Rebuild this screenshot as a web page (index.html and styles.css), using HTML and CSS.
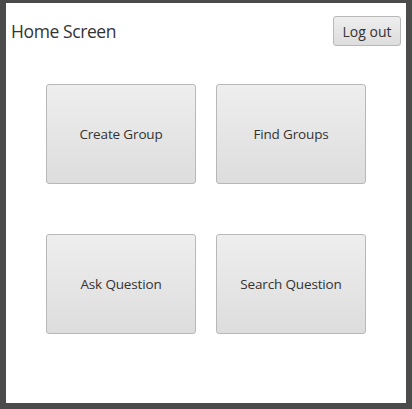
FILE: index.html
```html
<!DOCTYPE html>
<html>
<head>
<meta charset="utf-8">
<link rel="stylesheet" href="styles.css">
</head>
<body>
<div class="frame">
  <div class="header">
    <div class="title">Home Screen</div>
    <button class="btn logout">Log out</button>
  </div>
  <div class="grid">
    <button class="btn tile">Create Group</button>
    <button class="btn tile">Find Groups</button>
    <button class="btn tile">Ask Question</button>
    <button class="btn tile">Search Question</button>
  </div>
</div>
</body>
</html>
```
FILE: styles.css
```css
html, body {
  margin: 0;
  padding: 0;
  background: #4b4b4b;
}
body {
  width: 412px;
  height: 409px;
  padding: 3px 6px 6px 6px;
  box-sizing: border-box;
}
.frame {
  background: #ffffff;
  height: 400px;
  box-sizing: border-box;
  padding: 13px 5px 0 5px;
  font-family: "Open Sans", "Noto Sans", sans-serif;
  color: #333;
}
.header {
  display: flex;
  justify-content: space-between;
  align-items: center;
  height: 30px;
}
.title {
  font-size: 17.5px;
  color: #333;
  letter-spacing: -0.4px;
}
.btn {
  font-family: "Open Sans", "Noto Sans", sans-serif;
  color: #333;
  background: linear-gradient(#eeeeee, #dddddd);
  border: 1px solid #b8b8b8;
  border-radius: 3px;
  padding: 0;
  box-sizing: border-box;
  cursor: pointer;
}
.logout {
  width: 68px;
  height: 30px;
  font-size: 14px;
}
.grid {
  margin: 38px auto 0 auto;
  display: grid;
  grid-template-columns: 150px 150px;
  grid-auto-rows: 100px;
  column-gap: 20px;
  row-gap: 50px;
  width: 320px;
}
.tile {
  width: 150px;
  height: 100px;
  font-size: 13.5px;
  letter-spacing: -0.15px;
}
```
